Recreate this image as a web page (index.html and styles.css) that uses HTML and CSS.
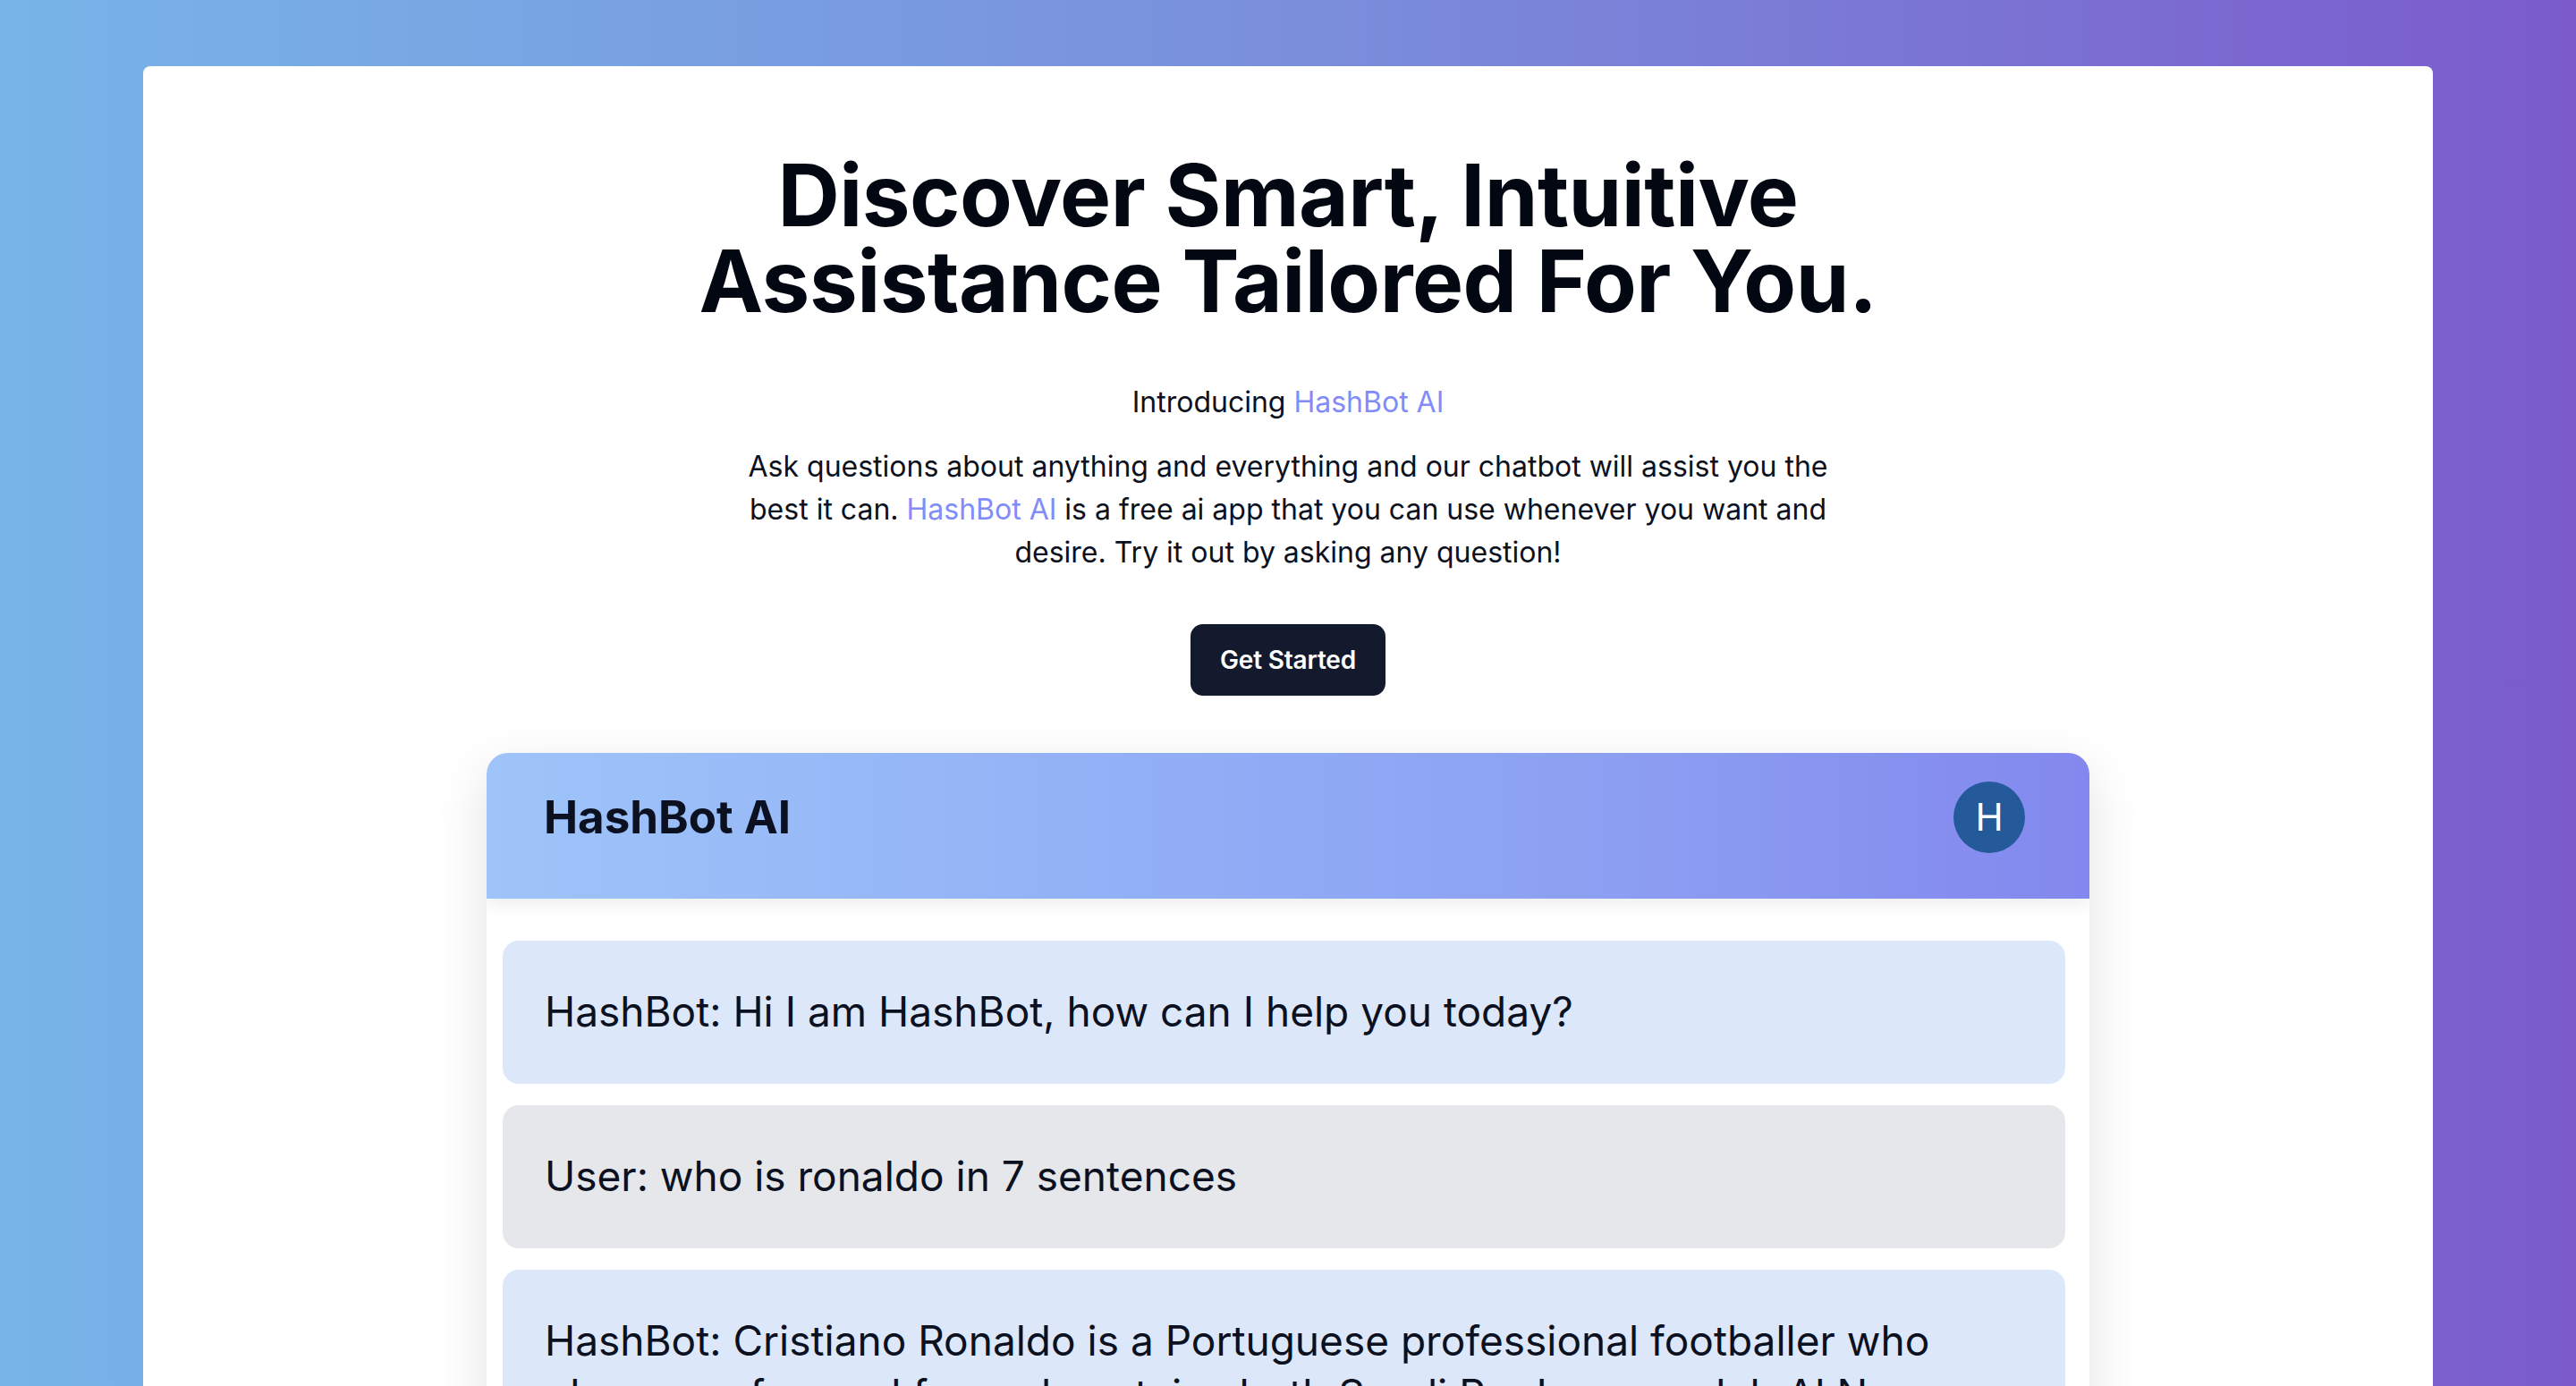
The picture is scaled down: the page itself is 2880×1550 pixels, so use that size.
FILE: index.html
```html
<!DOCTYPE html>
<html lang="en">
<head>
<meta charset="utf-8">
<title>HashBot AI</title>
<link rel="stylesheet" href="styles.css">
</head>
<body>
  <main class="page">
    <section class="card">
      <h1 class="headline"><span class="line">Discover Smart, Intuitive</span><span class="line">Assistance Tailored For You.</span></h1>
      <p class="intro">Introducing <span class="brand">HashBot AI</span></p>
      <p class="lead">Ask questions about anything and everything and our chatbot will assist you the best it can. <span class="brand">HashBot AI</span> is a free ai app that you can use whenever you want and desire. Try it out by asking any question!</p>
      <button class="cta" type="button">Get Started</button>

      <div class="chat">
        <header class="chat-header">
          <h2 class="chat-title">HashBot AI</h2>
          <div class="avatar">H</div>
        </header>
        <div class="messages">
          <div class="msg bot">HashBot: Hi I am HashBot, how can I help you today?</div>
          <div class="msg user">User: who is ronaldo in 7 sentences</div>
          <div class="msg bot">HashBot: Cristiano Ronaldo is a Portuguese professional footballer who plays as a forward for and captains both Saudi Pro League club Al Nassr and the Portugal national team.</div>
        </div>
      </div>
    </section>
  </main>
</body>
</html>
```

FILE: styles.css
```css
* { box-sizing: border-box; }

html, body {
  margin: 0;
  height: 100%;
}

body {
  background: linear-gradient(to right, #77b4e8 0%, #7a8fdc 50%, #7b5bcc 100%);
  font-family: Inter, "Noto Sans", "Liberation Sans", sans-serif;
  color: #0b1120;
  overflow: hidden;
}

.page {
  padding: 74px 160px 0;
}

.card {
  background: #ffffff;
  border-radius: 8px;
  padding: 96px 0 120px;
  display: flex;
  flex-direction: column;
  align-items: center;
}

.headline {
  margin: 0;
  font-size: 96px;
  line-height: 96px;
  font-weight: 700;
  text-align: center;
  color: #030712;
  letter-spacing: -0.5px;
  display: flex;
  flex-direction: column;
  align-items: center;
}

.line {
  display: block;
}

.intro {
  margin: 70px 0 0;
  font-size: 32px;
  line-height: 36px;
  text-align: center;
}

.brand {
  color: #818cf8;
}

.lead {
  margin: 30px 0 0;
  max-width: 1250px;
  font-size: 32px;
  line-height: 48px;
  text-align: center;
}

.cta {
  margin-top: 56px;
  height: 80px;
  padding: 0 33px;
  background: #141a2d;
  color: #ffffff;
  border: none;
  border-radius: 14px;
  font-family: inherit;
  font-size: 28px;
  letter-spacing: -0.2px;
  font-weight: 600;
}

.chat {
  margin-top: 64px;
  width: 1792px;
  background: #ffffff;
  border-radius: 24px 24px 0 0;
  box-shadow: 0 20px 60px rgba(0, 0, 0, 0.12);
  overflow: hidden;
}

.chat-header {
  display: flex;
  align-items: center;
  justify-content: space-between;
  height: 163px;
  padding: 0 72px 20px 64px;
  background: linear-gradient(to right, #9ec4f9, #92b0f6 40%, #8c9ff2 70%, #8388ee);
  box-shadow: 0 6px 18px rgba(0, 0, 0, 0.08);
  position: relative;
  z-index: 1;
}

.chat-title {
  margin: 0;
  font-size: 51px;
  line-height: 64px;
  font-weight: 700;
  color: #0b1120;
}

.avatar {
  width: 80px;
  height: 80px;
  border-radius: 50%;
  background: #245a9a;
  color: #ffffff;
  display: flex;
  align-items: center;
  justify-content: center;
  font-size: 42px;
  font-weight: 400;
}

.messages {
  display: flex;
  flex-direction: column;
  gap: 24px;
  padding: 47px 27px 40px 18px;
}

.msg {
  border-radius: 18px;
  padding: 49px 50px 51px 47px;
  font-size: 46px;
  line-height: 60px;
  color: #0b1120;
}

.msg.bot {
  background: #dde7fa;
}

.msg.user {
  background: #e5e7eb;
}
```
